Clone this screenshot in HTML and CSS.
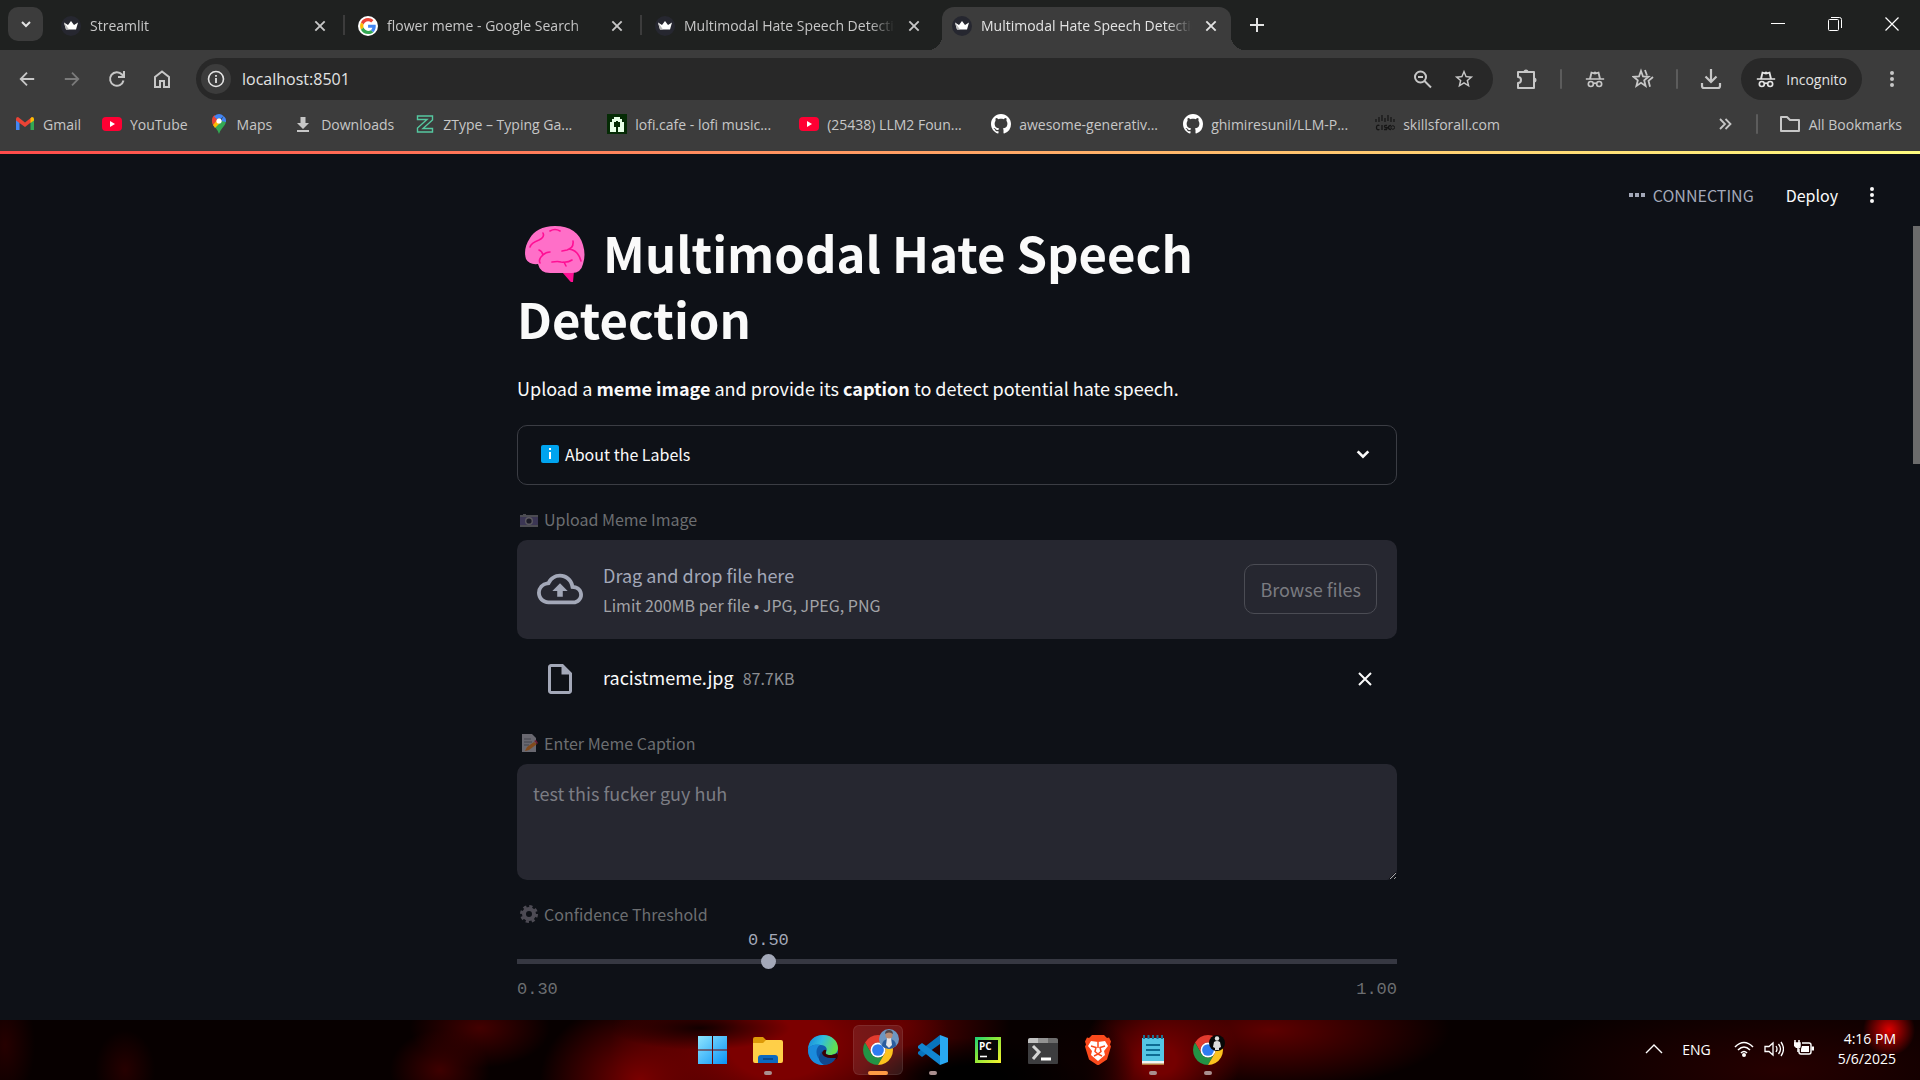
FILE: index.html
```html
<!DOCTYPE html>
<html lang="en">
<head>
<meta charset="utf-8">
<meta name="viewport" content="width=device-width, initial-scale=1">
<title>Multimodal Hate Speech Detection</title>
<link rel="stylesheet" href="styles.css">
</head>
<body>
<svg class="sprite" aria-hidden="true">
  <symbol id="crown" viewBox="0 0 20 20"><circle cx="10" cy="10" r="10" fill="#262730"/><path d="M3 6.500l4 2.500 3-4 3 4 4-2.500-2 7H5z" fill="#fff"/><path d="M5 13.500l-2-7 5 7z" fill="#bbb"/></symbol>
  <symbol id="cross" viewBox="0 0 12 12"><path d="M2 2l8 8M10 2l-8 8" stroke="currentColor" stroke-width="1.600" fill="none"/></symbol>
  <symbol id="chevron" viewBox="0 0 12 12"><path d="M2 4l4 4 4-4" stroke="currentColor" stroke-width="2" fill="none"/></symbol>
  <symbol id="dots" viewBox="0 0 24 24"><path d="M12 8a2 2 0 1 0 0-4 2 2 0 0 0 0 4zm0 2a2 2 0 1 0 0 4 2 2 0 0 0 0-4zm0 6a2 2 0 1 0 0 4 2 2 0 0 0 0-4z" fill="currentColor"/></symbol>
  <symbol id="arrow" viewBox="0 0 20 20"><path d="M18 10H3M10 3l-7 7 7 7" stroke="currentColor" stroke-width="2" fill="none"/></symbol>
  <symbol id="incog" viewBox="0 0 24 24"><path d="M1 11h22v2H1zM5 11l2-8 3 .800L12 3l2 .800L17 3l2 8h-2.400l-1.200-5.300-3.400.800-3.400-.800L7.400 11z" fill="currentColor"/><g fill="none" stroke="currentColor" stroke-width="2"><circle cx="7" cy="18" r="3"/><circle cx="17" cy="18" r="3"/><path d="M10 17.500q2-1 4 0"/></g></symbol>
  <symbol id="youtube" viewBox="0 0 20 20"><rect y="3" width="20" height="14" rx="4" fill="#ff0033"/><path d="M8 7l5 3-5 3z" fill="#fff"/></symbol>
  <symbol id="github" viewBox="0 0 16 16"><path fill="#fff" d="M8 0C3.580 0 0 3.580 0 8c0 3.540 2.290 6.530 5.470 7.590.4.070.55-.17.55-.38 0-.19-.01-.82-.01-1.490-2.010.37-2.530-.49-2.690-.94-.09-.23-.48-.94-.82-1.130-.28-.15-.68-.52-.01-.53.63-.01 1.080.58 1.230.82.72 1.210 1.870.87 2.330.66.07-.52.28-.87.51-1.070-1.780-.2-3.640-.89-3.640-3.950 0-.87.31-1.590.82-2.150-.08-.2-.36-1.020.08-2.120 0 0 .67-.21 2.200.82.64-.18 1.320-.27 2-.27s1.360.09 2 .27c1.530-1.040 2.200-.82 2.200-.82.44 1.100.16 1.920.08 2.120.51.56.82 1.270.82 2.150 0 3.070-1.870 3.750-3.650 3.950.29.25.54.73.54 1.480 0 1.070-.01 1.930-.01 2.200 0 .21.15.46.55.38A8.010 8.010 0 0 0 16 8c0-4.420-3.580-8-8-8z"/></symbol>
  <symbol id="chrome" viewBox="2 2 44 44"><path d="M4.950 13A22 22 0 0 1 43.050 13H24A11 11 0 0 0 14.470 29.500z" fill="#e33b2e"/><path d="M4.950 13A22 22 0 0 0 24 46L33.500 29.500A11 11 0 0 1 14.470 29.500z" fill="#239345"/><path d="M43.050 13A22 22 0 0 1 24 46L33.500 29.500A11 11 0 0 0 24 13z" fill="#fcc31e"/><circle cx="24" cy="24" r="11" fill="#fff"/><circle cx="24" cy="24" r="8.600" fill="#2f7cf0"/></symbol>
</svg>

<header class="browser">
  <div class="tabs" role="tablist">
    <button class="tab-search" aria-label="Search tabs"><svg class="i12"><use href="#chevron"/></svg></button>
    <div class="tab" role="tab"><svg class="i20"><use href="#crown"/></svg><span class="tab-title">Streamlit</span><button class="tab-close" aria-label="Close tab"><svg class="i14"><use href="#cross"/></svg></button></div>
    <div class="tab divided" role="tab"><svg class="i20" viewBox="0 0 48 48"><circle cx="24" cy="24" r="24" fill="#fff"/><g transform="translate(5 5) scale(.8)"><path fill="#EA4335" d="M24 9.500c3.540 0 6.710 1.220 9.210 3.600l6.850-6.850C35.900 2.380 30.470 0 24 0 14.620 0 6.510 5.380 2.560 13.220l7.980 6.190C12.430 13.720 17.740 9.500 24 9.500z"/><path fill="#4285F4" d="M46.980 24.550c0-1.570-.15-3.090-.38-4.550H24v9.020h12.940c-.58 2.960-2.260 5.480-4.780 7.180l7.730 6c4.510-4.180 7.090-10.360 7.090-17.650z"/><path fill="#FBBC05" d="M10.530 28.590A14.500 14.500 0 0 1 9.770 24c0-1.600.27-3.140.76-4.590l-7.980-6.190A24 24 0 0 0 0 24c0 3.880.92 7.540 2.560 10.780z"/><path fill="#34A853" d="M24 48c6.480 0 11.930-2.130 15.890-5.810l-7.730-6c-2.150 1.450-4.920 2.300-8.160 2.300-6.260 0-11.570-4.220-13.470-9.910l-7.980 6.190C6.510 42.620 14.620 48 24 48z"/></g></svg><span class="tab-title">flower meme - Google Search</span><button class="tab-close" aria-label="Close tab"><svg class="i14"><use href="#cross"/></svg></button></div>
    <div class="tab divided" role="tab"><svg class="i20"><use href="#crown"/></svg><span class="tab-title">Multimodal Hate Speech Detection</span><button class="tab-close" aria-label="Close tab"><svg class="i14"><use href="#cross"/></svg></button></div>
    <div class="tab active" role="tab" aria-selected="true"><svg class="i20"><use href="#crown"/></svg><span class="tab-title">Multimodal Hate Speech Detection</span><button class="tab-close" aria-label="Close tab"><svg class="i14"><use href="#cross"/></svg></button></div>
    <button class="icon-btn new-tab" aria-label="New tab"><svg class="i14" viewBox="0 0 14 14"><path d="M7 0v14M0 7h14" stroke="currentColor" stroke-width="2"/></svg></button>
    <div class="window-controls">
      <button aria-label="Minimize"><svg class="i14" viewBox="0 0 14 14"><path d="M0 6.500h14" stroke="#fff"/></svg></button>
      <button aria-label="Restore"><svg class="i14" viewBox="0 0 14 14"><g fill="none" stroke="#fff"><rect x=".5" y="2.500" width="10" height="11" rx="1"/><path d="M3 .500h8.500a2 2 0 0 1 2 2V11"/></g></svg></button>
      <button aria-label="Close"><svg class="i14" viewBox="0 0 14 14"><path d="M.5.500l13 13M13.500.500l-13 13" stroke="#fff" stroke-width="1.200"/></svg></button>
    </div>
  </div>

  <div class="toolbar">
    <nav class="nav-buttons">
      <button class="icon-btn" aria-label="Back"><svg class="i18"><use href="#arrow"/></svg></button>
      <button class="icon-btn faded" aria-label="Forward"><svg class="i18 flip"><use href="#arrow"/></svg></button>
      <button class="icon-btn" aria-label="Reload"><svg class="i18" viewBox="0 0 18 18"><path d="M15.500 10.500A6.800 6.800 0 1 1 14 4.500l1.500 1.700M16 1v6h-6" fill="none" stroke="currentColor" stroke-width="2"/></svg></button>
      <button class="icon-btn" aria-label="Home"><svg class="i18" viewBox="0 0 18 18"><path d="M2 17V7l7-5.500L16 7v10h-5v-6H7v6z" fill="none" stroke="currentColor" stroke-width="2"/></svg></button>
    </nav>
    <div class="omnibox">
      <button class="site-info" aria-label="Site information"><svg class="i18" viewBox="0 0 18 18"><circle cx="9" cy="9" r="7.500" fill="none" stroke="currentColor" stroke-width="1.600"/><path d="M9 8v5M9 5v1.800" stroke="currentColor" stroke-width="1.800"/></svg></button>
      <input class="url" type="text" aria-label="Address" value="localhost:8501">
      <button class="icon-btn" aria-label="Zoom"><svg class="i20" viewBox="0 0 20 20"><circle cx="7.500" cy="8" r="5.500" fill="none" stroke="currentColor" stroke-width="2"/><path d="M5 8h5M11.500 12l6.500 6.500" stroke="currentColor" stroke-width="2"/></svg></button>
      <button class="icon-btn" aria-label="Bookmark"><svg class="i22" viewBox="0 0 24 24"><path fill="currentColor" d="M22 9.240l-7.190-.62L12 2 9.190 8.630 2 9.240l5.460 4.730L5.820 21 12 17.270 18.180 21l-1.630-7.030zM12 15.400l-3.760 2.270 1-4.280-3.320-2.880 4.380-.38L12 6.100l1.710 4.040 4.380.38-3.320 2.880 1 4.280z"/></svg></button>
    </div>
    <div class="actions">
      <button class="icon-btn" aria-label="Extensions"><svg class="i22" viewBox="0 0 22 22"><path d="M2 4h16v16H2v-5a3 3 0 0 0 0-6z" fill="none" stroke="currentColor" stroke-width="2" stroke-linejoin="round"/><path d="M7.500 4a2.500 2.500 0 0 1 5 0zM18 9.500a2.500 2.500 0 0 1 0 5z" fill="currentColor"/></svg></button>
      <span class="sep"></span>
      <button class="icon-btn" aria-label="Private window"><svg class="i20"><use href="#incog"/></svg></button>
      <button class="icon-btn" aria-label="Starred"><svg class="i22" viewBox="0 0 22 22"><path d="M9 3l2 5.500 5.500.300-4.300 3.600 1.400 5.600L9 14.800 4.400 18l1.400-5.600L1.500 8.800 7 8.500z" fill="none" stroke="currentColor" stroke-width="1.800"/><path d="M13 2l2 5.500M21 9l-4.500 3.800 1.500 6" fill="none" stroke="currentColor" stroke-width="1.800"/></svg></button>
      <span class="sep"></span>
      <button class="icon-btn" aria-label="Downloads"><svg class="i22" viewBox="0 0 22 22"><path d="M11 1v13M5.500 8.500L11 14l5.500-5.500M2 15v3q0 2 2 2h14q2 0 2-2v-3" fill="none" stroke="currentColor" stroke-width="2.200"/></svg></button>
      <button class="incognito"><svg class="i20"><use href="#incog"/></svg>Incognito</button>
      <button class="icon-btn" aria-label="Menu"><svg class="i24"><use href="#dots"/></svg></button>
    </div>
  </div>

  <nav class="bookmarks" aria-label="Bookmarks">
    <a href="#"><svg class="i20" viewBox="0 0 20 20"><path d="M1 5v11h3.500V8z" fill="#4285f4"/><path d="M15.500 8v8H19V5z" fill="#34a853"/><path d="M1 5q0-2 2-2l7 5.500L17 3v4.500l-7 5.500-9-6.500z" fill="#ea4335"/><path d="M15.500 4.200L17 3q2 0 2 2v1.500L15.500 9z" fill="#fbbc04"/></svg>Gmail</a>
    <a href="#"><svg class="i20"><use href="#youtube"/></svg>YouTube</a>
    <a href="#"><svg class="i20" viewBox="0 0 20 20"><path d="M10 20q-.8-3-3-5.500Q3 10 3 7h14q0 3-4 7.500-2.200 2.500-3 5.500z" fill="#34a853"/><path d="M3.200 9Q2 3 6 1l3 6-4.500 5z" fill="#ea4335"/><path d="M5 2.500Q10-2 14.500 2L10 7z" fill="#4285f4"/><path d="M4 11l6-7 3 3-7 7z" fill="#fbbc04"/><path d="M14.500 2q3 2 2.500 6l-5-1z" fill="#4285f4"/><circle cx="10" cy="7" r="2.600" fill="#fff"/></svg>Maps</a>
    <a href="#"><svg class="i20" viewBox="0 0 20 20"><path d="M7.500 3h5v6H16l-6 6-6-6h3.500zM4 16h12v2H4z" fill="#c7c7c7"/></svg>Downloads</a>
    <a href="#" class="wide"><svg class="i20" viewBox="0 0 20 20"><path d="M2.500 2h15v4L8 14.500h9.500V18h-15v-4L12 5.500H2.500z" fill="none" stroke="#55c8a0" stroke-width="1.400"/></svg>ZType – Typing Ga...</a>
    <a href="#" class="wide"><svg class="i20" viewBox="0 0 20 20"><path d="M0 0h20v20H0z" fill="#052b05"/><path d="M3 18V8h2V5h2V3h6v2h2v3h2v10h-6v-5h2V8h-2V7H9v1H7v5h2v5z" fill="#e8ffe8"/></svg>lofi.cafe - lofi music...</a>
    <a href="#" class="wide"><svg class="i20"><use href="#youtube"/></svg>(25438) LLM2 Foun...</a>
    <a href="#" class="wide"><svg class="i20"><use href="#github"/></svg>awesome-generativ...</a>
    <a href="#" class="wide"><svg class="i20"><use href="#github"/></svg>ghimiresunil/LLM-P...</a>
    <a href="#"><svg class="i20" viewBox="0 0 20 20"><path d="M1 5v3M4 3v5M7 1v6M10 4v4M13 1v6M16 3v5M19 5v3" stroke="#151515" stroke-width="1.200"/><path d="M4.500 11.500q-3-1-3 2t3 2M7 11v5M12 11.500q-3-.5-2.500 1t2 1 0 2H9M16 11.500q-2.500 0-2.500 2t2.500 2" fill="none" stroke="#151515" stroke-width="1.300"/><circle cx="17.800" cy="13.500" r="1.800" fill="none" stroke="#151515"/></svg>skillsforall.com</a>
    <button class="icon-btn more" aria-label="More bookmarks"><svg class="i14" viewBox="0 0 14 14"><path d="M2 2l5 5-5 5M7.500 2l5 5-5 5" fill="none" stroke="currentColor" stroke-width="1.800"/></svg></button>
    <span class="sep"></span>
    <a href="#"><svg class="i22" viewBox="0 0 22 22"><path d="M2 18V4h6l3 3h9v11z" fill="none" stroke="currentColor" stroke-width="2" stroke-linejoin="round"/></svg>All Bookmarks</a>
  </nav>
</header>

<div class="app">
  <div class="app-header">
    <span class="status"><svg class="i16" viewBox="0 0 16 16"><path d="M0 6h4v4H0zM6 6h4v4H6zM12 6h4v4h-4z" fill="currentColor"/></svg>CONNECTING</span>
    <button class="deploy">Deploy</button>
    <button class="icon-btn" aria-label="Main menu"><svg class="i24"><use href="#dots"/></svg></button>
  </div>
  <div class="scroll-thumb"></div>

  <main class="column">
    <h1><svg class="brain" viewBox="0 0 60 56"><path d="M37 46l12-1-1 11q-2 1-4-2z" fill="#ff0f94"/><path d="M30 0C17 0 9 5 5 12 0 19-1 27 1 33q3 6 12 5 2 9 12 9h22q9 0 11-9 3-9 0-19C55 7 45 0 30 0z" fill="#ff6fc8"/><g fill="none" stroke="#ff0f94" stroke-width="1.600" stroke-linecap="round"><path d="M25 5q5-3 10 0M18 7q2 4-4 7-8 3-9 7M14 24q3 1 4 5 3-3 7-3M18 29q-5 4-3 8M48 15q1 7-6 9l-5 1M44 23q9 1 12 12M27 36q6-1 9 0 7 1 11-2M39 36l2 4"/></g></svg> Multimodal Hate Speech Detection</h1>
    <p class="intro">Upload a <strong>meme image</strong> and provide its <strong>caption</strong> to detect potential hate speech.</p>

    <details class="expander">
      <summary><svg class="i18" viewBox="0 0 18 18"><rect width="18" height="18" rx="2" fill="#00a4ef"/><path d="M9 7v7M9 3v2" stroke="#fff" stroke-width="2"/></svg><span>About the Labels</span><svg class="i16"><use href="#chevron"/></svg></summary>
    </details>

    <section class="field">
      <h2 class="label"><svg class="i18" viewBox="0 0 18 18"><path d="M0 5h3V4h3v1h12v12H0z" fill="#4c4c52"/><path d="M0 7h18v8H0z" fill="#3b3654"/><circle cx="9" cy="11" r="4" fill="#5c5a60"/><circle cx="9" cy="11" r="2.600" fill="#1a1a26"/></svg>Upload Meme Image</h2>
      <div class="dropzone">
        <svg class="i46" viewBox="0 0 24 24"><path fill="currentColor" d="M19.350 10.040A7.490 7.490 0 0 0 12 4C9.110 4 6.600 5.640 5.350 8.040A5.994 5.994 0 0 0 0 14c0 3.310 2.690 6 6 6h13c2.760 0 5-2.240 5-5 0-2.640-2.050-4.780-4.650-4.960zM19 18H6c-2.210 0-4-1.790-4-4 0-2.050 1.530-3.760 3.560-3.970l1.070-.11.5-.95A5.469 5.469 0 0 1 12 6c2.620 0 4.880 1.860 5.390 4.430l.3 1.500 1.530.11A2.980 2.980 0 0 1 22 15c0 1.650-1.350 3-3 3zM8 13h2.550v3h2.900v-3H16l-4-4z"/></svg>
        <div class="drop-text"><span class="drop-main">Drag and drop file here</span><small>Limit 200MB per file • JPG, JPEG, PNG</small></div>
        <button class="browse" disabled>Browse files</button>
      </div>
      <div class="file-row">
        <svg class="i36" viewBox="0 0 24 24"><path fill="currentColor" d="M14 2H6c-1.100 0-2 .9-2 2v16c0 1.100.9 2 2 2h12c1.100 0 2-.9 2-2V8zM6 20V4h7v5h5v11z"/></svg>
        <div class="file-name">racistmeme.jpg<small>87.7KB</small></div>
        <button class="icon-btn" aria-label="Remove file"><svg class="i14" viewBox="0 0 14 14"><path d="M1 1l12 12M13 1L1 13" stroke="currentColor" stroke-width="2"/></svg></button>
      </div>
    </section>

    <section class="field">
      <label class="label" for="caption"><svg class="i18" viewBox="0 0 18 18"><path d="M2 0h10l4 4v14H2z" fill="#696870"/><path d="M4 5h7M4 8h8M4 11h5" stroke="#45444c"/><path d="M5 17l2-4 7-5 3 2-8 6z" fill="#824a1c"/><path d="M14 7l2-1 2 3-1 1z" fill="#6e1e34"/></svg>Enter Meme Caption</label>
      <textarea id="caption" disabled>test this fucker guy huh</textarea>
    </section>

    <section class="field">
      <label class="label" for="threshold"><svg class="i18" viewBox="0 0 18 18"><circle cx="9" cy="9" r="5" fill="none" stroke="#4d4b54" stroke-width="4"/><circle cx="9" cy="9" r="7.600" fill="none" stroke="#4d4b54" stroke-width="2.800" stroke-dasharray="3.200 2.770"/></svg>Confidence Threshold</label>
      <div class="slider">
        <output class="value" for="threshold" style="left: 28.57%">0.50</output>
        <div class="range-wrap"><input id="threshold" type="range" min="0.3" max="1" step="0.01" value="0.5" disabled></div>
        <div class="ticks"><span>0.30</span><span>1.00</span></div>
      </div>
    </section>
  </main>
</div>

<footer class="taskbar">
  <div class="tray-balance"></div>
  <div class="apps">
    <button aria-label="Start"><svg class="i30" viewBox="0 0 30 30"><defs><linearGradient id="win" x2="1" y2="1"><stop stop-color="#8fe6ff"/><stop offset="1" stop-color="#0a92f5"/></linearGradient></defs><path d="M0 1h14v13.500H0zM15 1h14v13.500H15zM0 15.500h14V29H0zM15 15.500h14V29H15z" fill="url(#win)"/></svg></button>
    <button class="open" aria-label="File Explorer"><svg class="i30" viewBox="0 0 30 30"><path d="M0 4q0-2 2-2h8l3 3v5H0z" fill="#dd9a08"/><path d="M0 8h10l3-3h15q2 0 2 2v19q0 2-2 2H2q-2 0-2-2z" fill="#ffcf48"/><path d="M5 28v-5q0-3 3-3h14q3 0 3 3v5z" fill="#0b69c0"/><path d="M10 24h10" stroke="#064a8f" stroke-width="2"/></svg></button>
    <button aria-label="Edge"><svg class="i30" viewBox="0 0 30 30"><defs><linearGradient id="edge" x2="1" y2=".3"><stop stop-color="#1684d8"/><stop offset=".5" stop-color="#30bce0"/><stop offset="1" stop-color="#62e052"/></linearGradient></defs><circle cx="15" cy="15" r="15" fill="#0f5cae"/><path d="M0 15C0 5 7 0 15 0c9 0 15 6 15 13 0 5-4 7-8 7-3 0-5-1-4-3 2-3 0-7-5-7C6 9 1 11 0 15z" fill="url(#edge)"/><path d="M0 15c1-4 6-6 12-5-5 3-5 12 2 17l3 3C8 31 0 25 0 15z" fill="#1b8bdc"/><path d="M18 17c-1 2 1 3 4 3 2 0 5-.5 7-2l1 3-1 3q-7 3-12 0c-4-2-4-7-1-9q3-1 2 2z" fill="#3a0004"/><path d="M14 16q-1 8 14 7-4 7-12 7-9-5-2-14z" fill="#10488f"/></svg></button>
    <button class="open current" aria-label="Chrome"><svg class="i30"><use href="#chrome"/></svg><svg class="avatar" viewBox="0 0 20 20"><circle cx="10" cy="10" r="10" fill="#6d96c2"/><path d="M3 17q0-7 7-7t7 7q-7 6-14 0z" fill="#2b5d9d"/><path d="M8 9h4l1 7-3 3-3-3z" fill="#e5e5e8"/><circle cx="10" cy="6" r="3.600" fill="#b98a72"/><path d="M6 5q0-4 4-4t4 4q-4-3-8 0z" fill="#51464a"/></svg></button>
    <button class="open" aria-label="Visual Studio Code"><svg class="i30" viewBox="0 0 30 30"><path d="M22 0l8 3v24l-8 3z" fill="#29a8f2"/><path d="M22 0v9L4 22l-4-3v-2z" fill="#0873bd"/><path d="M22 30v-9L4 8l-4 3v2z" fill="#1185d1"/></svg></button>
    <button aria-label="PyCharm"><svg class="i26" viewBox="0 0 26 26"><defs><linearGradient id="pc" x2="1" y2="1"><stop stop-color="#17d17b"/><stop offset=".4" stop-color="#83e63a"/><stop offset="1" stop-color="#fbf32e"/></linearGradient></defs><path d="M0 0h26v26H0z" fill="url(#pc)"/><path d="M3 3h20v20H3z" fill="#080808"/><text x="4" y="13" class="pc-text">PC</text><path d="M5 19.500h7" stroke="#fff" stroke-width="1.600"/></svg></button>
    <button aria-label="Terminal"><svg class="i30" viewBox="0 0 30 30"><path d="M0 4h30v24q0 1-1 1H1q-1 0-1-1z" fill="#3d3d3f"/><path d="M0 8V5q0-2 2-2h8v5z" fill="#c0c0c0"/><path d="M10 3h10v5H10z" fill="#929292"/><path d="M20 3h8q2 0 2 2v3H20z" fill="#6c6c6c"/><path d="M5 11l6 6-6 7" stroke="#d4d4d4" stroke-width="3" fill="none"/><path d="M13 24h10" stroke="#fff" stroke-width="3"/></svg></button>
    <button aria-label="Brave"><svg class="i30" viewBox="0 0 30 30"><path d="M9 0h12l3 3 2-.500 2 4-1 3 1 2-4 13-9 6-9-6L2 11.500l1-2-1-3 2-4L6 3z" fill="#fb4a1c"/><path d="M8 6l7 1 7-1 3 5-4 5 1 4-7 6-7-6 1-4-4-5z" fill="#fff"/><path d="M8 11l5 1.500-1 4L15 19l3-2.500-1-4 5-1.500M11 21l4-2 4 2M15 7v6" fill="none" stroke="#fb4a1c" stroke-width="1.500"/></svg></button>
    <button class="open" aria-label="Notepad"><svg class="i30" viewBox="0 0 30 30"><path d="M4 3h22v24H4z" fill="#55c6e4"/><path d="M4 26h22v4H4z" fill="#f3f3f3"/><path d="M4 28.500h22V30H4z" fill="#b47b3f"/><path d="M6 0v4M10.500 0v4M15 0v4M19.500 0v4M24 0v4" stroke="#1b7394" stroke-width="2"/><path d="M8 10h14M8 15h14M8 20h14" stroke="#0d6c93" stroke-width="2"/></svg></button>
    <button class="open" aria-label="Chrome, second profile"><svg class="i30"><use href="#chrome"/></svg><svg class="avatar low" viewBox="0 0 20 20"><circle cx="10" cy="10" r="8" fill="#080808"/><circle cx="10" cy="5.500" r="2.200" fill="#ddd"/><path d="M7 9q3-2 6 0l1 5-2 1v2H8v-2l-2-1z" fill="#ddd"/></svg></button>
  </div>
  <div class="tray">
    <button aria-label="Show hidden icons"><svg class="i18" viewBox="0 0 18 18"><path d="M1 13l8-8 8 8" fill="none" stroke="#fff" stroke-width="1.400"/></svg></button>
    <button class="lang">ENG</button>
    <button class="status-icons" aria-label="Network, volume and battery">
      <svg class="i20" viewBox="0 0 20 20"><g fill="none" stroke="#fff" stroke-width="1.600"><path d="M1 8q9-9 18 0M4 11q6-6 12 0M7 14q3-3 6 0"/></g><circle cx="10" cy="16" r="2" fill="#fff"/></svg>
      <svg class="i20" viewBox="0 0 20 20"><path d="M1 7.500h4L9 4v12l-4-3.500H1zM12 7q2 3 0 6M14.500 5q4 5 0 10M17 3q5 7 0 14" fill="none" stroke="#fff" stroke-width="1.300"/></svg>
      <svg class="i20" viewBox="0 0 20 20"><path d="M1 1v3M5 1v3M0 4h6v3q0 2-2 2v4" fill="none" stroke="#fff" stroke-width="1.500"/><path d="M0 4h6v3L4 9H2L0 7z" fill="#fff"/><path d="M8 4h7q2 0 2 2v7q0 2-2 2H7q-2 0-2-2v-3" fill="none" stroke="#fff" stroke-width="1.400"/><path d="M8 7h7v6H7v-3zM17.500 7.500H20v4h-2.500z" fill="#fff"/></svg>
    </button>
    <div class="clock"><time>4:16 PM</time><time>5/6/2025</time></div>
  </div>
</footer>
</body>
</html>
```
FILE: styles.css
```css
* { box-sizing: border-box; }

body {
  margin: 0;
  min-height: 100vh;
  display: flex;
  flex-direction: column;
  background: #0e1117;
  font-family: "Open Sans", "Noto Sans", sans-serif;
  font-size: 14px;
  color: #fafafa;
}

button {
  padding: 0;
  border: 0;
  background: none;
  color: inherit;
  font: inherit;
}

svg { flex: none; display: block; }

.sprite { position: absolute; width: 0; height: 0; }
.i12 { width: 12px; height: 12px; }
.i14 { width: 14px; height: 14px; }
.i16 { width: 16px; height: 16px; }
.i18 { width: 18px; height: 18px; }
.i20 { width: 20px; height: 20px; }
.i22 { width: 22px; height: 22px; }
.i24 { width: 24px; height: 24px; }
.i26 { width: 26px; height: 26px; }
.i30 { width: 30px; height: 30px; }
.i36 { width: 36px; height: 36px; }
.i46 { width: 46px; height: 46px; }
.flip { transform: scaleX(-1); }

.icon-btn {
  width: 36px;
  height: 36px;
  flex: none;
  display: grid;
  place-items: center;
}

.sep {
  width: 2px;
  height: 20px;
  border-radius: 1px;
  background: #5c5c5c;
}

/* Browser chrome */
.browser { background: #3c3c3c; color: #c7c7c7; }

.tabs {
  height: 50px;
  display: flex;
  align-items: flex-start;
  gap: 8px;
  padding: 7px 0 0 8px;
  background: #1f2120;
}

.tab-search {
  width: 35px;
  height: 34px;
  flex: none;
  display: grid;
  place-items: center;
  border-radius: 10px;
  background: #3c3c3c;
  color: #e3e3e3;
}

.tab {
  position: relative;
  flex: 0 1 289px;
  min-width: 0;
  height: 43px;
  display: flex;
  align-items: center;
  gap: 9px;
  padding: 0 10px 6px;
}

.tab-title {
  flex: 1;
  overflow: hidden;
  white-space: nowrap;
  mask-image: linear-gradient(to right, #000 88%, transparent);
}

.tab-close { width: 20px; height: 20px; display: grid; place-items: center; }

.divided::before {
  content: "";
  position: absolute;
  left: -5px;
  top: 8px;
  width: 2px;
  height: 20px;
  background: #3c3c3c;
}

.active {
  border-radius: 12px 12px 0 0;
  background: #3c3c3c;
  color: #e3e3e3;
}

.active::before,
.active::after {
  content: "";
  position: absolute;
  bottom: 0;
  width: 14px;
  height: 14px;
}
.active::before { right: 100%; background: radial-gradient(circle at 0 0, transparent 14px, #3c3c3c 14px); }
.active::after { left: 100%; background: radial-gradient(circle at 100% 0, transparent 14px, #3c3c3c 14px); }

.new-tab { height: 36px; color: #e3e3e3; }

.window-controls { margin-left: auto; display: flex; }
.window-controls button { width: 57px; height: 34px; display: grid; place-items: center; }

.toolbar {
  display: flex;
  align-items: center;
  gap: 16px;
  height: 58px;
  padding: 0 10px 0 9px;
}

.nav-buttons { display: flex; gap: 9px; }
.faded { color: #7a7a7a; }

.omnibox {
  flex: 1;
  height: 42px;
  display: flex;
  align-items: center;
  gap: 5px;
  padding: 0 11px 0 5px;
  border-radius: 21px;
  background: #282828;
}

.site-info {
  width: 30px;
  height: 30px;
  display: grid;
  place-items: center;
  border-radius: 50%;
  background: #3c3c3c;
  color: #e3e3e3;
}

.url {
  flex: 1;
  min-width: 0;
  padding: 0 6px;
  border: 0;
  background: none;
  color: #e3e3e3;
  font: inherit;
  font-size: 16px;
}

.actions { display: flex; align-items: center; gap: 12px; }
.actions .sep { margin: 0 3px; }

.incognito {
  height: 42px;
  display: flex;
  align-items: center;
  gap: 10px;
  padding: 0 15px;
  border-radius: 21px;
  background: #282828;
  color: #e3e3e3;
}

.bookmarks {
  height: 43px;
  display: flex;
  align-items: center;
  gap: 21px;
  padding: 0 18px 11px 15px;
}

.bookmarks a {
  display: flex;
  align-items: center;
  gap: 8px;
  color: inherit;
  text-decoration: none;
  white-space: nowrap;
}
.bookmarks .wide { width: 171px; overflow: hidden; }
.more { margin-left: auto; width: 20px; }

/* Streamlit page */
.app {
  position: relative;
  flex: 1;
  padding-right: 6px;
  font-family: "Noto Sans CJK JP", "Noto Sans CJK SC", sans-serif;
  font-size: 18px;
}

.app::before {
  content: "";
  display: block;
  height: 3px;
  margin-right: -6px;
  background: linear-gradient(to right, #ff4b4b, #fffd80);
}

.app-header {
  height: 65px;
  display: flex;
  align-items: center;
  justify-content: flex-end;
  gap: 16px;
  padding: 17px 24px 0 0;
  font-size: 16px;
}

.status {
  display: flex;
  align-items: center;
  gap: 8px;
  margin-right: 16px;
  color: #a3a8b8;
}

.scroll-thumb {
  position: absolute;
  right: 0;
  top: 75px;
  width: 7px;
  height: 238px;
  background: #6b6b6b;
}

.column { max-width: 880px; margin: 0 auto; }

h1 {
  margin: 0 0 22px;
  font-size: 49px;
  line-height: 66px;
  font-weight: 700;
}

.brain {
  display: inline-block;
  width: 60px;
  height: 56px;
  margin: 0 7px 0 8px;
  vertical-align: -9px;
}

.intro { margin: 0 0 22px; line-height: 30px; }

.expander { border: 1px solid #3b3d44; border-radius: 10px; font-size: 16px; }

.expander summary {
  height: 58px;
  display: flex;
  align-items: center;
  gap: 6px;
  padding: 0 25px 2px 23px;
  list-style: none;
}
.expander summary span { flex: 1; }

.field { margin-top: 22px; }

.label {
  display: flex;
  align-items: center;
  gap: 6px;
  margin: 0 0 9px;
  padding-left: 3px;
  font-size: 16px;
  line-height: 24px;
  font-weight: 400;
  color: #6c6e71;
}

.dropzone {
  height: 99px;
  display: flex;
  align-items: center;
  gap: 20px;
  padding: 0 20px 2px;
  border-radius: 10px;
  background: #262730;
  color: #a3a8b8;
}

.drop-text { flex: 1; line-height: 30px; padding-top: 2px; }
.drop-main, .drop-text small { display: block; }
small { font-size: 16px; color: #a2a3a7; }

.browse {
  height: 50px;
  padding: 0 15px;
  border: 1px solid #4b4c54;
  border-radius: 10px;
  color: #7a7b80;
}

.file-row {
  display: flex;
  align-items: center;
  gap: 25px;
  height: 40px;
  margin: 20px 14px 32px 25px;
  color: #a3a8b8;
}
.file-name { flex: 1; padding-bottom: 5px; color: #fafafa; }
.file-name small { margin-left: 9px; color: #8c8e92; }
.file-row .icon-btn { color: #fafafa; }

textarea {
  display: block;
  width: 100%;
  height: 116px;
  padding: 13px 16px;
  border: 0;
  border-radius: 10px;
  background: #262730;
  color: #7c7d84;
  font: inherit;
  line-height: 32px;
  resize: vertical;
}

.slider {
  position: relative;
  margin-top: -6px;
  padding-top: 25px;
  font-family: "Liberation Mono", monospace;
  font-size: 17px;
  line-height: 24px;
}

.value {
  position: absolute;
  top: 0;
  transform: translateX(-50%);
  color: #a3a8b8;
}

.range-wrap {
  display: flex;
  align-items: center;
  height: 15px;
  background: linear-gradient(#363842, #363842) center / 100% 5px no-repeat;
}

input[type="range"] {
  appearance: none;
  flex: 1;
  height: 15px;
  margin: 0 -7px;
  background: none;
}
input[type="range"]::-webkit-slider-thumb {
  appearance: none;
  width: 15px;
  height: 15px;
  border-radius: 50%;
  background: #a3a8b8;
}

.ticks {
  display: flex;
  justify-content: space-between;
  margin-top: 9px;
  color: #6c6e71;
}

/* Taskbar */
.taskbar {
  height: 60px;
  display: grid;
  grid-template-columns: 1fr auto 1fr;
  align-items: center;
  background:
    radial-gradient(circle at 1889px 10px, #e00000, transparent 26px),
    radial-gradient(90px 22px at 700px 8px, #120000, transparent),
    radial-gradient(110px 40px at 970px 58px, #000 30%, transparent),
    radial-gradient(60px 50px at 1075px 45px, #0c0000, transparent),
    radial-gradient(50px 40px at 440px 50px, #3e0000, transparent),
    radial-gradient(70px 40px at 480px 8px, #430000, transparent),
    radial-gradient(30px 40px at 125px 50px, #260000, transparent),
    radial-gradient(30px 60px at 5px 25px, #260000, transparent),
    radial-gradient(100px 80px at 640px 60px, #7a0000, transparent),
    radial-gradient(170px 110px at 780px 25px, #7c0000 30%, transparent),
    radial-gradient(110px 80px at 900px 5px, #5a0000, transparent),
    radial-gradient(80px 70px at 1160px 40px, #740000 20%, transparent),
    radial-gradient(180px 60px at 1270px 10px, #5e0000, transparent),
    radial-gradient(260px 80px at 1780px 50px, #260000, transparent),
    #070000;
}

.apps { display: flex; gap: 5px; }

.apps button {
  position: relative;
  width: 50px;
  height: 50px;
  display: grid;
  place-items: center;
  border-radius: 6px;
}

.apps .current {
  background: rgba(255, 255, 255, .09);
  box-shadow: inset 0 0 0 1px rgba(255, 255, 255, .08);
}

.open::after {
  content: "";
  position: absolute;
  left: 21px;
  bottom: 0;
  width: 8px;
  height: 4px;
  border-radius: 2px;
  background: #a98f8f;
}

.current::after { left: 15px; width: 20px; background: #ff9a45; }

.avatar { position: absolute; width: 20px; height: 20px; top: 4px; right: 4px; }
.low { top: 8px; right: 6px; }

.pc-text { font: 700 10px "Open Sans", sans-serif; fill: #fff; }

.tray {
  display: flex;
  align-items: center;
  justify-content: flex-end;
  gap: 19px;
  padding: 0 24px 2px 0;
  color: #fff;
}
.status-icons { display: flex; gap: 10px; padding: 0 5px 0 4px; }
.clock { text-align: right; line-height: 20px; }
.clock time { display: block; }
```
